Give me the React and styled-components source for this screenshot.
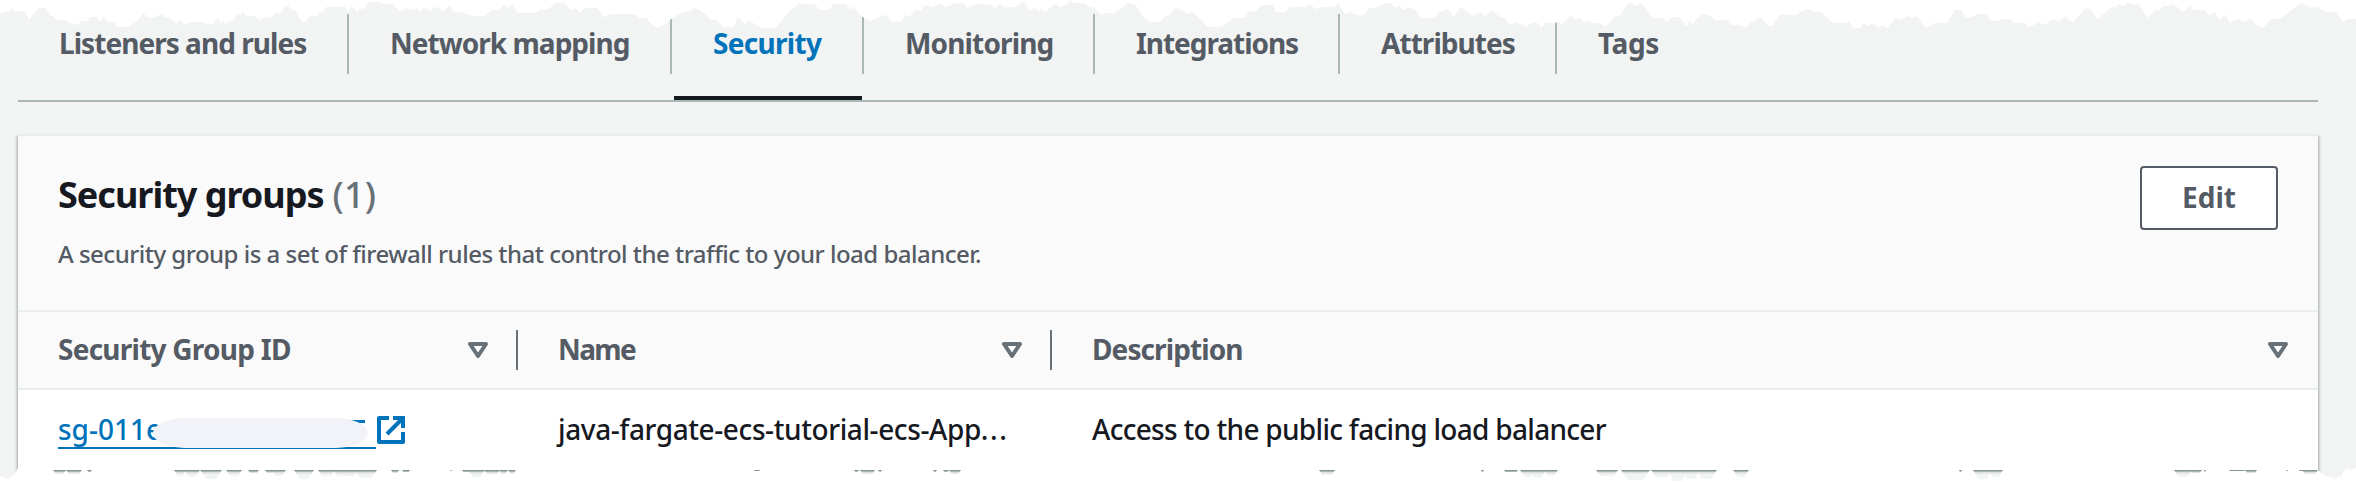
import React from 'react';
import styled, { createGlobalStyle } from 'styled-components';

const GlobalStyle = createGlobalStyle`
  * { box-sizing: border-box; }
  body {
    margin: 0;
    background: #fff;
    font-family: "Noto Sans", "Open Sans", sans-serif;
    font-size: 28px;
    color: #16191f;
  }
`;

const Page = styled.main`
  position: relative;
  width: 2356px;
  height: 482px;
  padding: 0 38px 0 18px;
  background: #f2f3f3;
  overflow: hidden;
`;

const TabBar = styled.nav`
  display: flex;
  height: 102px;
  border-bottom: 2px solid #aab7b8;
`;

const Tab = styled.div`
  display: flex;
  flex-direction: column;
  justify-content: space-between;
  width: ${(p) => p.$width}px;
  height: 100px;
  padding-top: 14px;
`;

const TabLabel = styled.a`
  height: 60px;
  padding: 0 0 0 41px;
  border-right: 2px solid ${(p) => (p.$last ? 'transparent' : '#aab7b8')};
  line-height: 60px;
  font-weight: 700;
  letter-spacing: ${(p) => p.$track}px;
  color: ${(p) => (p.$active ? '#0073bb' : '#545b64')};
  white-space: nowrap;
`;

const LabelText = styled.span`
  display: block;
  line-height: 38px;
  padding-top: 10px;
`;

const ActiveMark = styled.span`
  height: 4px;
  margin: 0 2px;
  background: #16191f;
`;

const Panel = styled.section`
  height: 336px;
  margin-top: 32px;
  border-top: 2px solid #eaeded;
  background: #fff;
  box-shadow:
    0 2px 2px 0 rgba(0, 28, 36, 0.3),
    2px 2px 2px 0 rgba(0, 28, 36, 0.15),
    -2px 2px 2px 0 rgba(0, 28, 36, 0.15);
`;

const PanelHeader = styled.header`
  display: flex;
  justify-content: space-between;
  height: 176px;
  padding: 30px 40px 0;
  border-bottom: 2px solid #eaeded;
  background: #fafafa;
`;

const Title = styled.h2`
  display: flex;
  gap: 9px;
  margin: 4px 0 0;
  font-size: 36px;
  line-height: 50px;
  font-weight: 700;
  letter-spacing: -1px;
`;

const Counter = styled.span`
  font-weight: 500;
  letter-spacing: 0.2px;
  color: #687078;
`;

const Summary = styled.p`
  margin: 16px 0 0;
  font-size: 24px;
  line-height: 36px;
  font-weight: 500;
  letter-spacing: -0.51px;
  color: #545b64;
`;

const Button = styled.button`
  width: 138px;
  height: 64px;
  padding: 0 0 2px;
  border: 2px solid #545b64;
  border-radius: 4px;
  background: #fff;
  font: 700 28px/58px "Noto Sans", sans-serif;
  color: #545b64;
`;

const Row = styled.div`
  display: grid;
  grid-template-columns: 500px 534px 1266px;
`;

const HeaderRow = styled(Row)`
  height: 78px;
  align-items: center;
  border-bottom: 2px solid #eaeded;
  background: #fafafa;
`;

const HeaderCell = styled.div`
  display: flex;
  align-items: center;
  justify-content: space-between;
  height: 40px;
  padding: 0 ${(p) => (p.$last ? 30 : 28)}px 0 40px;
  border-right: ${(p) => (p.$last ? '0' : '2px solid #687078')};
  font-weight: 700;
  line-height: 38px;
  letter-spacing: ${(p) => p.$track}px;
  color: #545b64;
`;

const HeaderText = styled.span`
  padding-bottom: 2px;
`;

const DataRow = styled(Row)`
  height: 80px;
`;

const Cell = styled.div`
  display: flex;
  align-items: flex-start;
  padding: 20px 0 0 40px;
  line-height: 38px;
  font-weight: 500;
  letter-spacing: ${(p) => p.$track || 0}px;
  white-space: nowrap;
`;

const Dots = styled.span`
  letter-spacing: 1.6px;
`;

const IdLink = styled.a`
  position: relative;
  width: 318px;
  height: 39px;
  border-bottom: 2px solid #0073bb;
  color: #0073bb;
`;

const Redaction = styled.span`
  position: absolute;
  left: 95px;
  top: 8px;
  width: 215px;
  height: 30px;
  border-radius: 32px / 15px;
  background: #f2f3f8;
`;

const DigitTop = styled.span`
  position: absolute;
  left: 290px;
  top: 10px;
  width: 17px;
  height: 3px;
  background: #0073bb;
`;

const LinkIcon = styled.svg`
  margin: 6px 0 0 1px;
  fill: none;
  stroke: #0073bb;
  stroke-width: 4;
`;

const Torn = styled.svg`
  position: absolute;
  inset: 0;
`;

const SortIcon = () => (
  <svg width="20" height="16" viewBox="0 0 20 16">
    <path d="M2 2H18L10 14Z" fill="#fff" stroke="#687078" strokeWidth="4" strokeLinejoin="round" />
  </svg>
);

const ExternalIcon = () => (
  <LinkIcon width="28" height="28" viewBox="0 0 28 28">
    <path d="M12 2H2V26H26V16M16 2H26V12M26 2L10 18" strokeLinejoin="round" />
    <path d="M24 2H26V4" strokeLinejoin="miter" />
  </LinkIcon>
);

// Each run holds the x origin, the x scale and the points of one stretch of the tear.
const tearRuns = [
  [0, 3, '0,42 10,36 25,36 36,24 45,34 73,34 88,58 105,35 118,24 136,24 152,47 160,47 170,60 197,60 208,70 222,70 233,77 245,63 265,63 272,51 290,51 298,62 303,62 310,48 325,66 343,66 350,81 388,81 398,70 405,70 432,40 440,52 465,52 475,46 480,46 485,37 492,52 505,52 520,64 530,72 538,58 558,76 568,66 612,66 618,72 640,72 650,57 656,57 663,72 668,60 676,72 683,62 690,68 715,42 722,46 729,34 737,47 762,47 783,62 793,50 800,54 805,50 812,56 828,38 843,38 855,17 865,17 875,30 885,30 905,66 918,66 928,48 953,48 962,37 970,37 980,20 1037,20 1044,38 1052,22 1062,22 1072,36 1080,24 1090,30 1105,6 1142,6 1152,12 1178,12 1200,36 1222,24 1228,30 1235,24 1242,33 1250,24 1258,36'],
  [0, 1.96, '833,20 843,36 850,20 862,26 870,36 880,16 890,37 905,37 928,48 950,48 965,30 978,30 988,12 997,24 1004,12 1013,38 1050,38 1058,28 1075,28 1088,9 1107,9 1118,30 1127,24 1137,38 1145,24 1170,24 1185,53 1197,42 1245,42 1252,54 1266,54 1285,83 1302,74 1318,54 1340,36 1350,36 1360,24 1372,30 1395,60 1405,60 1417,82 1437,82 1447,52 1460,74 1467,60 1485,78 1493,83 1520,83'],
  [780, 1.96, '5,58 20,34 38,8 46,13 68,13 78,30 95,30 105,12 130,12 136,30 143,18 155,42 165,54 178,62 200,46 212,48 220,66 237,66 245,46 253,52 265,28 277,34 283,15 300,22 313,10 325,22 343,10 360,10 367,24 385,13 412,13 420,25 432,12 440,22 460,22 478,6 490,34 498,22 508,34 512,24 520,35 540,12 550,22 560,15 568,3 578,10 598,10 605,20 615,20 628,46 640,38 655,42 683,7 697,15 712,52 725,66 745,66 755,48 762,48 777,22 800,42 806,34 820,52 837,80 865,80 888,54 910,54 920,34 932,34 945,15 967,15 972,36 990,36 1000,20 1030,20 1038,12 1050,28 1062,22 1085,22 1095,10 1107,42 1120,36 1130,46 1145,46 1155,24 1168,24 1187,9 1197,9 1205,22 1215,18 1222,30 1232,22 1247,30 1255,54 1282,54 1293,34 1300,34 1307,24 1320,50 1335,20 1357,48 1372,36 1382,48 1395,30 1410,50 1420,54 1432,76 1443,66 1463,82 1472,68 1485,68 1493,83 1500,68 1520,68'],
  [1556, 1.96, '0,68 5,62 10,76 22,56 30,45 38,60 47,52 55,68 62,62 78,70 88,70 97,80 115,50 127,46 140,12 148,9 155,18 168,9 178,30 190,54 208,54 218,66 228,52 243,52 255,80 262,63 268,72 277,54 288,42 302,46 312,60 335,60 343,74 362,76 370,84 383,66 402,50 415,78 425,78 438,45 472,45 480,34 495,28 505,36 520,36 543,69 567,69 573,63 583,84 596,84 603,70 610,78 620,69 632,84 640,76 650,84 665,53 673,60 690,48 697,54 708,50 725,85 743,69 767,69 782,30 795,30 802,52 815,52 825,42 843,42 852,62 868,62 877,57 890,58 900,69 920,69 925,83 945,68 957,74 975,57 985,66 998,50 1013,68 1037,26 1048,26 1062,58 1088,22 1098,22 1103,12 1113,18 1122,7 1133,15 1142,12 1160,54 1173,30 1182,30 1190,18 1203,18 1210,12 1230,36 1242,18 1250,30 1272,30 1280,46 1290,36 1302,60 1312,43 1320,68 1337,57 1352,66 1360,53 1372,76 1385,84 1402,57 1418,57 1442,30 1460,9 1480,24 1492,20 1508,36 1530,36 1543,66 1550,57 1568,57'],
];

const topTear = tearRuns
  .map(([origin, scale, pts]) =>
    pts
      .split(' ')
      .map((pt) => {
        const [x, y] = pt.split(',').map(Number);
        return `${(origin + x / scale).toFixed(1)},${(y / 3).toFixed(1)}`;
      })
      .join(' ')
  )
  .join(' ');

// Scraps of the panel edge left below the tear: start, end, depth.
const scraps = [
  [53, 66, 4], [66, 82, 4], [87, 92, 2], [174, 186, 6], [184, 200, 7], [200, 222, 9], [226, 242, 6],
  [248, 259, 3], [265, 276, 3], [272, 286, 6], [294, 314, 9], [318, 335, 6], [333, 358, 6], [354, 377, 8],
  [391, 399, 3], [402, 410, 2], [450, 452, 1], [462, 471, 2], [468, 485, 7], [484, 500, 4], [499, 508, 4],
  [508, 516, 4], [754, 760, 1], [854, 859, 2], [860, 875, 4], [878, 882, 2], [933, 937, 2], [943, 949, 2],
  [949, 961, 4], [1319, 1335, 5], [1481, 1484, 2], [1504, 1518, 2], [1520, 1536, 7], [1530, 1546, 8],
  [1544, 1558, 6], [1596, 1618, 6], [1621, 1650, 10], [1651, 1672, 7], [1668, 1688, 11], [1682, 1700, 9],
  [1696, 1717, 9], [1733, 1749, 7], [1959, 1962, 2], [1973, 1992, 9], [1988, 2003, 7], [2174, 2192, 7],
  [2190, 2202, 3], [2204, 2206, 2], [2229, 2245, 1], [2245, 2257, 3], [2286, 2288, 1], [2299, 2303, 1],
  [2302, 2318, 4],
];

const tabs = [
  ['Listeners and rules', 331, -0.96],
  ['Network mapping', 323, -0.97],
  ['Security', 192, -0.7],
  ['Monitoring', 231, -0.85],
  ['Integrations', 245, -1.05],
  ['Attributes', 217, -0.95],
  ['Tags', 160, -0.4],
];

export default function App() {
  return (
    <>
      <GlobalStyle />
      <Page>
        <TabBar>
          {tabs.map(([name, width, track], i) => (
            <Tab key={name} $width={width}>
              <TabLabel $track={track} $active={i === 2} $last={i === tabs.length - 1}>
                <LabelText>{name}</LabelText>
              </TabLabel>
              {i === 2 && <ActiveMark />}
            </Tab>
          ))}
        </TabBar>
        <Panel>
          <PanelHeader>
            <div>
              <Title>
                Security groups <Counter>(1)</Counter>
              </Title>
              <Summary>
                A security group is a set of firewall rules that control the traffic to your load balancer.
              </Summary>
            </div>
            <Button>Edit</Button>
          </PanelHeader>
          <HeaderRow>
            <HeaderCell $track={-0.75}><HeaderText>Security Group ID</HeaderText><SortIcon /></HeaderCell>
            <HeaderCell $track={-1.6}><HeaderText>Name</HeaderText><SortIcon /></HeaderCell>
            <HeaderCell $track={-0.9} $last><HeaderText>Description</HeaderText><SortIcon /></HeaderCell>
          </HeaderRow>
          <DataRow>
            <Cell>
              <IdLink>
                sg-011e
                <DigitTop />
                <Redaction />
              </IdLink>
              <ExternalIcon />
            </Cell>
            <Cell $track={-0.4}>java-fargate-ecs-tutorial-ecs-App<Dots>...</Dots></Cell>
            <Cell $track={-0.7}>Access to the public facing load balancer</Cell>
          </DataRow>
        </Panel>
        <Torn width="2356" height="482" viewBox="0 0 2356 482">
          <defs>
            <linearGradient id="edge" gradientUnits="userSpaceOnUse" x1="0" y1="470" x2="0" y2="480">
              <stop offset="0.1" stopColor="#879596" />
              <stop offset="0.1" stopColor="#aab7b8" />
              <stop offset="0.2" stopColor="#aab7b8" />
              <stop offset="0.2" stopColor="#d5dbdb" />
              <stop offset="0.35" stopColor="#e6e9e9" />
              <stop offset="0.4" stopColor="#f2f3f3" />
            </linearGradient>
          </defs>
          <polygon fill="#fff" points={`0,0 ${topTear} 2356,0`} />
          <polygon
            fill="#fff"
            points="0,477 4,477 6,479 10,479 12,475 15,474 18,468 18,470 2318,470 2320,472 2324,475 2329,477 2332,477 2335,480 2338,476 2341,477 2344,471 2347,468 2351,470 2356,467 2356,482 0,482"
          />
          {scraps.map(([a, b, d]) => {
            const inset = Math.min((b - a) * 0.3, d * 0.7);
            return (
              <polygon
                key={a}
                fill="url(#edge)"
                points={`${a},470 ${b},470 ${b - inset},${470 + d} ${a + inset},${470 + d}`}
              />
            );
          })}
        </Torn>
      </Page>
    </>
  );
}
